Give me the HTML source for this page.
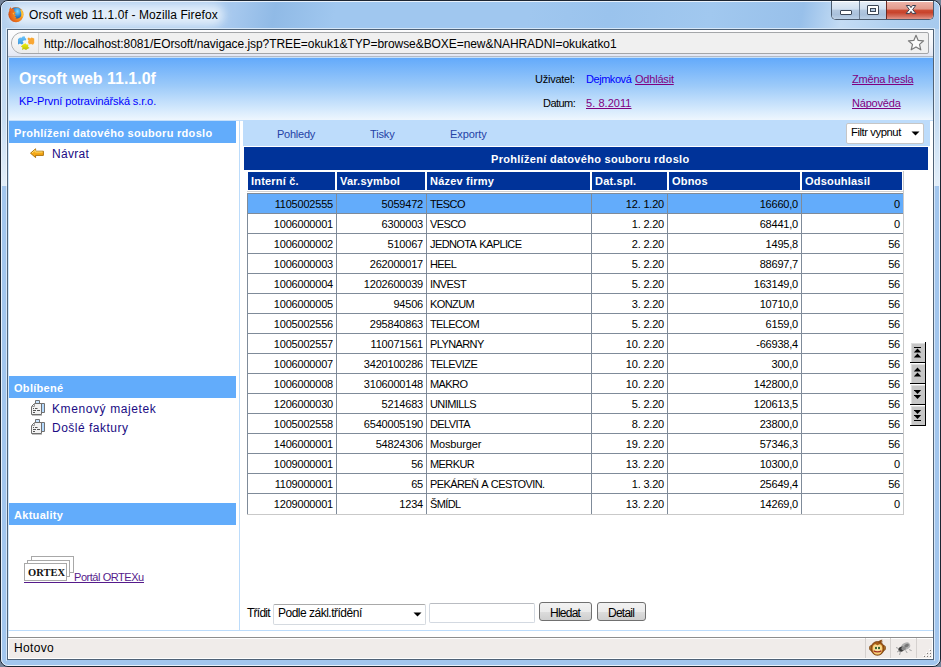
<!DOCTYPE html>
<html><head><meta charset="utf-8">
<style>
*{margin:0;padding:0;box-sizing:border-box}
html,body{width:941px;height:667px;overflow:hidden;background:#75849a}
body{position:relative;font-family:"Liberation Sans",sans-serif;font-size:11px;color:#000}
.a{position:absolute}
.t{position:absolute;white-space:nowrap;line-height:1}
#frame{left:0;top:0;width:941px;height:667px;border:1px solid #1c2532;border-radius:8px 8px 8px 8px;background:#a2c6ee}
#frame2{left:1px;top:1px;width:939px;height:665px;border:1px solid rgba(255,255,255,.75);border-radius:7px}
#navbar{left:7px;top:29px;width:927px;height:631px;border:1px solid #4f6277;background:#fff}
#navgrad{left:8px;top:30px;width:925px;height:28px;background:linear-gradient(#fdfdfe,#f4f6fa 50%,#e0e4f2)}
#url{left:11px;top:32px;width:918px;height:22px;border:1px solid #a4a6a9;border-radius:11px 2px 2px 11px;background:#f0f0f0}
#ident{left:12px;top:33px;width:27px;height:20px;border-radius:10px 0 0 10px;background:linear-gradient(#fbfbfb,#ececec);border-right:1px solid #d6d6d6}
#hdr{left:8px;top:58px;width:925px;height:62px;background:linear-gradient(#63aafb,#9ccaf9 45%,#d8ebfd 85%,#eef6fe)}
.sbh{position:absolute;left:9px;width:227px;height:22px;background:#62acfb;color:#fff;font-weight:bold;font-size:11px}
.sbh span{position:absolute;left:5px;top:7px;line-height:1;white-space:nowrap;letter-spacing:.3px}
.lnk{color:#800080;text-decoration:underline}
.blue{color:#0000ff}
.th{position:absolute;top:172px;height:18px;background:#003399;color:#fff;font-weight:bold}
.th span{position:absolute;left:3px;top:4px;line-height:1;white-space:nowrap;letter-spacing:.2px}
.hl{position:absolute;height:1px;background:#7f8b99}
.vl{position:absolute;width:1px;background:#7f8b99}
.cell{position:absolute;line-height:1;white-space:nowrap;letter-spacing:-.2px}
.r{text-align:right}
.btn{position:absolute;border:1px solid #707070;border-radius:3px;background:linear-gradient(#f2f2f2 0,#ebebeb 50%,#dddddd 50%,#cfcfcf 100%)}
.sb{position:absolute;left:911px;width:15px;height:20px;background:#c8c8c8;border-top:1px solid #fff;border-left:1px solid #fff;border-right:1px solid #000;border-bottom:1px solid #000}

#glass{left:2px;top:2px;width:937px;height:27px;border-radius:6px 6px 0 0;background:linear-gradient(100deg,#b4d0ee 0px,#a6c8ee 230px,#90bae6 270px,#a0c7ef 330px,#a0c7ef 520px,#9ac3ed 600px,#a1c8ef 700px,#98c0ea 790px,#c4dcf4 830px,#b0d0f0 880px,#a4c8ee 941px)}
#glow{left:10px;top:4px;width:214px;height:22px;border-radius:10px;background:rgba(235,243,252,.85);filter:blur(5px)}
.lnk{text-decoration-skip-ink:none}

</style></head><body>
<div class="a" id="frame"></div>
<div class="a" id="frame2"></div>
<div class="a" id="glass"></div>
<div class="a" id="glow"></div>
<div class="a" style="left:2px;top:29px;width:5px;height:157px;background:linear-gradient(#b8d3ef,#c6dcf2 55%,#e2eef9)"></div>
<div class="a" style="left:934px;top:29px;width:5px;height:157px;background:linear-gradient(#b8d3ef,#c6dcf2 55%,#e2eef9)"></div>
<div class="a" style="left:6px;top:28px;width:1px;height:633px;background:rgba(255,255,255,.55)"></div>
<div class="a" style="left:934px;top:28px;width:1px;height:633px;background:rgba(255,255,255,.55)"></div>
<svg class="a" style="left:8px;top:7px" width="16" height="16" viewBox="0 0 16 16">
<defs><radialGradient id="fxo" cx="0.75" cy="0.45" r="0.8"><stop offset="0" stop-color="#ffd23a"/><stop offset="0.35" stop-color="#f7931e"/><stop offset="0.8" stop-color="#e2601a"/><stop offset="1" stop-color="#b8400f"/></radialGradient>
<radialGradient id="fxb" cx="0.55" cy="0.35" r="0.7"><stop offset="0" stop-color="#7fd8fb"/><stop offset="0.6" stop-color="#2f8ad6"/><stop offset="1" stop-color="#1c4f9c"/></radialGradient></defs>
<circle cx="8" cy="7.6" r="7.6" fill="url(#fxo)"/>
<path d="M4.6 1.3C6.8.2 10.6.3 12.4 2 13.6 3.6 13.8 7.6 12.6 9.8 11.3 11.6 8.6 12 7.4 11.2L8.4 10.2 6.6 9.4 8 8.4 6.4 7 7.8 5.8 6.6 4.6 5.6 4.2Z" fill="url(#fxb)"/>
<path d="M1 3.5C1.4 1.6 2.3.4 2.9 0 2.9 1.2 3.4 2 4 2.4 4.8 1.6 5.6 1.6 6.2 2 5.6 2.6 5.8 3.4 6.6 3.8 6.2 4.6 5.4 4.6 5 5.2Z" fill="#ea6a1c"/>
<path d="M13.4 2.4C15.2 4.8 15.6 8.6 14.4 11 14.2 8.6 13.6 5.4 12.2 3.4Z" fill="#ffc93a" opacity=".9"/>
<path d="M4.6 6.2 6.2 6.6 5.4 7.6Z" fill="#fbd26a"/>
</svg>
<div class="t" style="left:29px;top:9px;font-size:12px;letter-spacing:.1px;color:#000">Orsoft web 11.1.0f - Mozilla Firefox</div>
<div class="a" style="left:831px;top:1px;width:103px;height:19px;border:1px solid #4a5a6e;border-top:none;border-radius:0 0 5px 5px;overflow:hidden;background:#fff">
<div class="a" style="left:0;top:1px;width:27px;height:17px;background:linear-gradient(#e4edf7,#d1e0f0 40%,#b3c8e0 50%,#a9c0db 75%,#bcd0e6)"></div>
<div class="a" style="left:27px;top:0;width:1px;height:19px;background:#6a7b90"></div>
<div class="a" style="left:28px;top:1px;width:26px;height:17px;background:linear-gradient(#e4edf7,#d1e0f0 40%,#b3c8e0 50%,#a9c0db 75%,#bcd0e6)"></div>
<div class="a" style="left:54px;top:0;width:1px;height:19px;background:#6b2a22"></div>
<div class="a" style="left:55px;top:1px;width:47px;height:17px;background:linear-gradient(#eeb3a8,#e29a8c 40%,#cc4b33 50%,#c8432c 62%,#d4705f 85%,#e4968a)"></div>
<div class="a" style="left:8px;top:9px;width:12px;height:5px;background:#fff;border:1px solid #3b4656;border-radius:1px"></div>
<div class="a" style="left:35px;top:4px;width:12px;height:10px;background:#fff;border:1px solid #3b4656;border-radius:1px"></div>
<div class="a" style="left:38px;top:7px;width:6px;height:4px;background:#b8cbe2;border:1px solid #3b4656"></div>
<svg class="a" style="left:73px;top:3px" width="13" height="12" viewBox="0 0 13 12"><path d="M1.3 1.5H4.6L6 3.6 7.4 1.5H10.7L7.7 5.5 10.9 9.6H7.5L6 7.4 4.5 9.6H1.1L4.3 5.5Z" fill="#fbfbfb" stroke="#3b3f50" stroke-width="1" stroke-linejoin="round"/></svg>
</div>
<div class="a" style="left:7px;top:28px;width:927px;height:1px;background:#d6e7f8"></div>
<div class="a" id="navbar"></div>
<div class="a" id="navgrad"></div>
<div class="a" id="url"></div>
<div class="a" id="ident"></div>
<svg class="a" style="left:14px;top:33px" width="24" height="20" viewBox="0 0 24 20">
<defs><linearGradient id="pzb" x1="0" y1="0" x2="0" y2="1"><stop offset="0" stop-color="#6cc4fa"/><stop offset="1" stop-color="#3b98e0"/></linearGradient>
<linearGradient id="pzy" x1="0" y1="0" x2="0" y2="1"><stop offset="0" stop-color="#f4f20a"/><stop offset="1" stop-color="#b8bc0a"/></linearGradient></defs>
<path d="M4 6 6 4.4 7.6 4.8 8.6 3.4 10.6 3.3 11.2 5 12.4 6 11.6 7.6 10 7.2 8.6 8.6 9.6 10 8 11.4 6 10.4 4 11.4Z" fill="url(#pzb)"/>
<path d="M13.7 5 15 4.5 16 5.5 17.5 4.5 19 5 20.2 5.6 20.2 10 19 11.7 17 11 15.5 11.5 14.5 10.5 14 9 14.6 7.5 13.7 6.5Z" fill="#f9a733"/>
<path d="M9 11.5 11.5 10.2 12.5 11.5 14.5 11.5 14 13.5 15.6 15 13.5 16 12 17.1 10 16 8 17 8.5 14.5 6.8 13.5Z" fill="url(#pzy)"/>
</svg>
<div class="t" style="left:44px;top:38px;font-size:12px;letter-spacing:-0.07px;color:#000">http://localhost:8081/EOrsoft/navigace.jsp?TREE=okuk1&amp;TYP=browse&amp;BOXE=new&amp;NAHRADNI=okukatko1</div>
<svg class="a" style="left:907px;top:34px" width="18" height="18" viewBox="0 0 18 18">
<path d="M9 1.3 11.2 6.4 16.6 6.8 12.5 10.4 13.8 15.8 9 12.9 4.2 15.8 5.5 10.4 1.4 6.8 6.8 6.4Z" fill="#fbfbfb" stroke="#7a7a7a" stroke-width="1.2" stroke-linejoin="round"/>
</svg>
<div class="a" style="left:8px;top:56px;width:925px;height:1px;background:#b3bac6"></div>
<div class="a" style="left:8px;top:57px;width:925px;height:1px;background:#c3e0fb"></div>
<div class="a" id="hdr"></div>
<div class="t" style="left:19px;top:71px;font-size:16px;font-weight:bold;color:#fff">Orsoft web 11.1.0f</div>
<div class="t blue" style="left:19px;top:96px;font-size:11px;letter-spacing:-.1px">KP-První potravinářská s.r.o.</div>
<div class="t" style="left:535px;top:74px;font-size:11px;letter-spacing:-.25px">Uživatel:</div>
<div class="t blue" style="left:586px;top:74px;font-size:11px;letter-spacing:-.45px">Dejmková</div>
<div class="t lnk" style="left:635px;top:74px;font-size:11px;letter-spacing:-.2px">Odhlásit</div>
<div class="t" style="left:543px;top:98px;font-size:11px;letter-spacing:-.55px">Datum:</div>
<div class="t lnk" style="left:586px;top:98px;font-size:11px;letter-spacing:.05px">5. 8.2011</div>
<div class="t lnk" style="left:852px;top:74px;font-size:11px;letter-spacing:-.2px">Změna hesla</div>
<div class="t lnk" style="left:852px;top:98px;font-size:11px;letter-spacing:-.2px">Nápověda</div>
<div class="a" style="left:8px;top:58px;width:1px;height:579px;background:#cfe6fb"></div>
<div class="a" style="left:8px;top:120px;width:925px;height:1px;background:#c4dffb"></div>
<div class="a" style="left:239px;top:120px;width:1px;height:511px;background:#bcdcfb"></div>
<div class="a" style="left:8px;top:630px;width:925px;height:1px;background:#bcdcfb"></div>
<div class="sbh" style="top:121px"><span>Prohlížení datového souboru rdoslo</span></div>
<svg class="a" style="left:29px;top:147px" width="16" height="12" viewBox="0 0 16 12">
<path d="M1.5 6.2 6.6 1.8V4.2H14.4V8.4H6.6V10.6Z" fill="#f5a816" stroke="#a86b00" stroke-width="0.9" stroke-linejoin="round"/>
<path d="M3 6 6.2 3.2V5H13.6" fill="none" stroke="#ffe27a" stroke-width="0.9"/>
</svg>
<div class="t" style="left:52px;top:148px;font-size:12px;letter-spacing:.3px;color:#200c84">Návrat</div>
<div class="sbh" style="top:376px"><span>Oblíbené</span></div>
<svg class="a" style="left:28px;top:397px" width="20" height="20" viewBox="0 0 20 20">
<path d="M7.5 3.5H11.5V6.5H16.5V15.5H7.5Z" fill="#c6e3ff" stroke="#727272" stroke-width="1"/>
<path d="M15 7.5V15" stroke="#8cc6fb" stroke-width="1.2" stroke-dasharray="1 1"/>
<path d="M3.5 9.5 6.5 6.5H13.5V17.5H3.5Z" fill="#f2f2f2" stroke="#6e6e6e" stroke-width="1"/>
<path d="M3.5 9.5H6.5V6.5" fill="none" stroke="#9a9a9a" stroke-width="1"/>
<path d="M5 11.5H6M7 11.5H9.5M5 13.5H8M9 13.5H12M5 15.5H7" stroke="#555" stroke-width="1"/>
<path d="M4 18.5H14" stroke="#c0c0c0" stroke-width="1"/>
</svg>
<div class="t" style="left:52px;top:403px;font-size:12px;letter-spacing:.6px;color:#200c84">Kmenový majetek</div>
<svg class="a" style="left:28px;top:416px" width="20" height="20" viewBox="0 0 20 20">
<path d="M7.5 3.5H11.5V6.5H16.5V15.5H7.5Z" fill="#c6e3ff" stroke="#727272" stroke-width="1"/>
<path d="M15 7.5V15" stroke="#8cc6fb" stroke-width="1.2" stroke-dasharray="1 1"/>
<path d="M3.5 9.5 6.5 6.5H13.5V17.5H3.5Z" fill="#f2f2f2" stroke="#6e6e6e" stroke-width="1"/>
<path d="M3.5 9.5H6.5V6.5" fill="none" stroke="#9a9a9a" stroke-width="1"/>
<path d="M5 11.5H6M7 11.5H9.5M5 13.5H8M9 13.5H12M5 15.5H7" stroke="#555" stroke-width="1"/>
<path d="M4 18.5H14" stroke="#c0c0c0" stroke-width="1"/>
</svg>
<div class="t" style="left:52px;top:422px;font-size:12px;letter-spacing:.5px;color:#200c84">Došlé faktury</div>
<div class="sbh" style="top:503px"><span>Aktuality</span></div>
<div class="a" style="left:31px;top:556px;width:43px;height:17px;border:1px solid #a8a8a8;background:#fff"></div>
<div class="a" style="left:27px;top:560px;width:43px;height:17px;border:1px solid #a8a8a8;background:#fff"></div>
<div class="a" style="left:24px;top:563px;width:43px;height:18px;border:1px solid #a8a8a8;background:#fff"></div>
<div class="t" style="left:28px;top:568px;font-family:'Liberation Serif',serif;font-weight:bold;font-size:10.5px;letter-spacing:0px;color:#111">ORTEX</div>
<div class="t" style="left:74px;top:572px;font-size:11px;letter-spacing:-.45px;color:#551a8b">Portál ORTEXu</div>
<div class="a" style="left:24px;top:582px;width:120px;height:1px;background:#551a8b"></div>
<div class="a" style="left:243px;top:120px;width:687px;height:26px;background:#bddcfb"></div>
<div class="t" style="left:277px;top:129px;color:#2442a6;letter-spacing:-.25px">Pohledy</div>
<div class="t" style="left:370px;top:129px;color:#2442a6;letter-spacing:-.15px">Tisky</div>
<div class="t" style="left:450px;top:129px;color:#2442a6;letter-spacing:-.1px">Exporty</div>
<div class="a" style="left:846px;top:123px;width:78px;height:21px;border:1px solid #c6c6c6;border-radius:2px;background:#fff"></div>
<div class="t" style="left:851px;top:127px;font-size:11.3px;letter-spacing:-.45px">Filtr vypnut</div>
<svg class="a" style="left:911px;top:131px" width="9" height="5" viewBox="0 0 9 5"><path d="M0.5 0.5H8.5L4.5 4.5Z" fill="#000"/></svg>
<div class="a" style="left:244px;top:147px;width:684px;height:23px;background:#003399"></div>
<div class="t" style="left:491px;top:154px;font-weight:bold;color:#fff;letter-spacing:.3px">Prohlížení datového souboru rdoslo</div>
<div class="th" style="left:248px;width:87px"><span>Interní č.</span></div>
<div class="th" style="left:337px;width:88px"><span>Var.symbol</span></div>
<div class="th" style="left:427px;width:163px"><span>Název firmy</span></div>
<div class="th" style="left:592px;width:75px"><span>Dat.spl.</span></div>
<div class="th" style="left:669px;width:131px"><span>Obnos</span></div>
<div class="th" style="left:802px;width:100px"><span>Odsouhlasil</span></div>
<div class="a" style="left:903px;top:171px;width:1px;height:344px;background:#c9c9c9"></div>
<div class="a" style="left:247px;top:191px;width:656px;height:1px;background:#d2d2d2"></div>
<div class="a" style="left:248px;top:194px;width:655px;height:19px;background:#63acfb"></div>
<div class="hl" style="left:247px;top:193px;width:656px"></div>
<div class="hl" style="left:247px;top:213px;width:656px"></div>
<div class="hl" style="left:247px;top:233px;width:656px"></div>
<div class="hl" style="left:247px;top:253px;width:656px"></div>
<div class="hl" style="left:247px;top:273px;width:656px"></div>
<div class="hl" style="left:247px;top:293px;width:656px"></div>
<div class="hl" style="left:247px;top:313px;width:656px"></div>
<div class="hl" style="left:247px;top:333px;width:656px"></div>
<div class="hl" style="left:247px;top:353px;width:656px"></div>
<div class="hl" style="left:247px;top:373px;width:656px"></div>
<div class="hl" style="left:247px;top:393px;width:656px"></div>
<div class="hl" style="left:247px;top:413px;width:656px"></div>
<div class="hl" style="left:247px;top:433px;width:656px"></div>
<div class="hl" style="left:247px;top:453px;width:656px"></div>
<div class="hl" style="left:247px;top:473px;width:656px"></div>
<div class="hl" style="left:247px;top:493px;width:656px"></div>
<div class="a" style="left:247px;top:514px;width:657px;height:1px;background:#c9c9c9"></div>
<div class="vl" style="left:247px;top:193px;height:321px"></div>
<div class="vl" style="left:336px;top:193px;height:321px"></div>
<div class="vl" style="left:426px;top:193px;height:321px"></div>
<div class="vl" style="left:591px;top:193px;height:321px"></div>
<div class="vl" style="left:667px;top:193px;height:321px"></div>
<div class="vl" style="left:801px;top:193px;height:321px"></div>
<div class="cell r" style="left:247px;width:86px;top:199px">1105002555</div>
<div class="cell r" style="left:336px;width:87px;top:199px">5059472</div>
<div class="cell" style="left:430px;top:199px;letter-spacing:-.6px;word-spacing:1px">TESCO</div>
<div class="cell r" style="left:591px;width:73px;top:199px">12. 1.20</div>
<div class="cell r" style="left:667px;width:131px;top:199px">16660,0</div>
<div class="cell r" style="left:801px;width:99px;top:199px">0</div>
<div class="cell r" style="left:247px;width:86px;top:219px">1006000001</div>
<div class="cell r" style="left:336px;width:87px;top:219px">6300003</div>
<div class="cell" style="left:430px;top:219px;letter-spacing:-.6px;word-spacing:1px">VESCO</div>
<div class="cell r" style="left:591px;width:73px;top:219px">1. 2.20</div>
<div class="cell r" style="left:667px;width:131px;top:219px">68441,0</div>
<div class="cell r" style="left:801px;width:99px;top:219px">0</div>
<div class="cell r" style="left:247px;width:86px;top:239px">1006000002</div>
<div class="cell r" style="left:336px;width:87px;top:239px">510067</div>
<div class="cell" style="left:430px;top:239px;letter-spacing:-.6px;word-spacing:1px">JEDNOTA KAPLICE</div>
<div class="cell r" style="left:591px;width:73px;top:239px">2. 2.20</div>
<div class="cell r" style="left:667px;width:131px;top:239px">1495,8</div>
<div class="cell r" style="left:801px;width:99px;top:239px">56</div>
<div class="cell r" style="left:247px;width:86px;top:259px">1006000003</div>
<div class="cell r" style="left:336px;width:87px;top:259px">262000017</div>
<div class="cell" style="left:430px;top:259px;letter-spacing:-.6px;word-spacing:1px">HEEL</div>
<div class="cell r" style="left:591px;width:73px;top:259px">5. 2.20</div>
<div class="cell r" style="left:667px;width:131px;top:259px">88697,7</div>
<div class="cell r" style="left:801px;width:99px;top:259px">56</div>
<div class="cell r" style="left:247px;width:86px;top:279px">1006000004</div>
<div class="cell r" style="left:336px;width:87px;top:279px">1202600039</div>
<div class="cell" style="left:430px;top:279px;letter-spacing:-.6px;word-spacing:1px">INVEST</div>
<div class="cell r" style="left:591px;width:73px;top:279px">5. 2.20</div>
<div class="cell r" style="left:667px;width:131px;top:279px">163149,0</div>
<div class="cell r" style="left:801px;width:99px;top:279px">56</div>
<div class="cell r" style="left:247px;width:86px;top:299px">1006000005</div>
<div class="cell r" style="left:336px;width:87px;top:299px">94506</div>
<div class="cell" style="left:430px;top:299px;letter-spacing:-.6px;word-spacing:1px">KONZUM</div>
<div class="cell r" style="left:591px;width:73px;top:299px">3. 2.20</div>
<div class="cell r" style="left:667px;width:131px;top:299px">10710,0</div>
<div class="cell r" style="left:801px;width:99px;top:299px">56</div>
<div class="cell r" style="left:247px;width:86px;top:319px">1005002556</div>
<div class="cell r" style="left:336px;width:87px;top:319px">295840863</div>
<div class="cell" style="left:430px;top:319px;letter-spacing:-.6px;word-spacing:1px">TELECOM</div>
<div class="cell r" style="left:591px;width:73px;top:319px">5. 2.20</div>
<div class="cell r" style="left:667px;width:131px;top:319px">6159,0</div>
<div class="cell r" style="left:801px;width:99px;top:319px">56</div>
<div class="cell r" style="left:247px;width:86px;top:339px">1005002557</div>
<div class="cell r" style="left:336px;width:87px;top:339px">110071561</div>
<div class="cell" style="left:430px;top:339px;letter-spacing:-.6px;word-spacing:1px">PLYNARNY</div>
<div class="cell r" style="left:591px;width:73px;top:339px">10. 2.20</div>
<div class="cell r" style="left:667px;width:131px;top:339px">-66938,4</div>
<div class="cell r" style="left:801px;width:99px;top:339px">56</div>
<div class="cell r" style="left:247px;width:86px;top:359px">1006000007</div>
<div class="cell r" style="left:336px;width:87px;top:359px">3420100286</div>
<div class="cell" style="left:430px;top:359px;letter-spacing:-.6px;word-spacing:1px">TELEVIZE</div>
<div class="cell r" style="left:591px;width:73px;top:359px">10. 2.20</div>
<div class="cell r" style="left:667px;width:131px;top:359px">300,0</div>
<div class="cell r" style="left:801px;width:99px;top:359px">56</div>
<div class="cell r" style="left:247px;width:86px;top:379px">1006000008</div>
<div class="cell r" style="left:336px;width:87px;top:379px">3106000148</div>
<div class="cell" style="left:430px;top:379px;letter-spacing:-.6px;word-spacing:1px">MAKRO</div>
<div class="cell r" style="left:591px;width:73px;top:379px">10. 2.20</div>
<div class="cell r" style="left:667px;width:131px;top:379px">142800,0</div>
<div class="cell r" style="left:801px;width:99px;top:379px">56</div>
<div class="cell r" style="left:247px;width:86px;top:399px">1206000030</div>
<div class="cell r" style="left:336px;width:87px;top:399px">5214683</div>
<div class="cell" style="left:430px;top:399px;letter-spacing:-.6px;word-spacing:1px">UNIMILLS</div>
<div class="cell r" style="left:591px;width:73px;top:399px">5. 2.20</div>
<div class="cell r" style="left:667px;width:131px;top:399px">120613,5</div>
<div class="cell r" style="left:801px;width:99px;top:399px">56</div>
<div class="cell r" style="left:247px;width:86px;top:419px">1005002558</div>
<div class="cell r" style="left:336px;width:87px;top:419px">6540005190</div>
<div class="cell" style="left:430px;top:419px;letter-spacing:-.6px;word-spacing:1px">DELVITA</div>
<div class="cell r" style="left:591px;width:73px;top:419px">8. 2.20</div>
<div class="cell r" style="left:667px;width:131px;top:419px">23800,0</div>
<div class="cell r" style="left:801px;width:99px;top:419px">56</div>
<div class="cell r" style="left:247px;width:86px;top:439px">1406000001</div>
<div class="cell r" style="left:336px;width:87px;top:439px">54824306</div>
<div class="cell" style="left:430px;top:439px;letter-spacing:-.15px;word-spacing:1px">Mosburger</div>
<div class="cell r" style="left:591px;width:73px;top:439px">19. 2.20</div>
<div class="cell r" style="left:667px;width:131px;top:439px">57346,3</div>
<div class="cell r" style="left:801px;width:99px;top:439px">56</div>
<div class="cell r" style="left:247px;width:86px;top:459px">1009000001</div>
<div class="cell r" style="left:336px;width:87px;top:459px">56</div>
<div class="cell" style="left:430px;top:459px;letter-spacing:-.6px;word-spacing:1px">MERKUR</div>
<div class="cell r" style="left:591px;width:73px;top:459px">13. 2.20</div>
<div class="cell r" style="left:667px;width:131px;top:459px">10300,0</div>
<div class="cell r" style="left:801px;width:99px;top:459px">0</div>
<div class="cell r" style="left:247px;width:86px;top:479px">1109000001</div>
<div class="cell r" style="left:336px;width:87px;top:479px">65</div>
<div class="cell" style="left:430px;top:479px;letter-spacing:-.6px;word-spacing:1px">PEKÁREŇ A CESTOVIN.</div>
<div class="cell r" style="left:591px;width:73px;top:479px">1. 3.20</div>
<div class="cell r" style="left:667px;width:131px;top:479px">25649,4</div>
<div class="cell r" style="left:801px;width:99px;top:479px">56</div>
<div class="cell r" style="left:247px;width:86px;top:499px">1209000001</div>
<div class="cell r" style="left:336px;width:87px;top:499px">1234</div>
<div class="cell" style="left:430px;top:499px;letter-spacing:-.6px;word-spacing:1px">ŠMÍDL</div>
<div class="cell r" style="left:591px;width:73px;top:499px">13. 2.20</div>
<div class="cell r" style="left:667px;width:131px;top:499px">14269,0</div>
<div class="cell r" style="left:801px;width:99px;top:499px">0</div>
<div class="a" style="left:925px;top:342px;width:1px;height:84px;background:#000"></div>
<div class="a" style="left:911px;top:343px;width:14px;height:19px;background:#c6c6c6;border-top:1px solid #dedede;border-left:1px solid #dedede"></div>
<div class="a" style="left:910px;top:362px;width:15px;height:1px;background:#000"></div>
<div class="a" style="left:911px;top:364px;width:14px;height:19px;background:#c6c6c6;border-top:1px solid #dedede;border-left:1px solid #dedede"></div>
<div class="a" style="left:910px;top:383px;width:15px;height:1px;background:#000"></div>
<div class="a" style="left:911px;top:385px;width:14px;height:19px;background:#c6c6c6;border-top:1px solid #dedede;border-left:1px solid #dedede"></div>
<div class="a" style="left:910px;top:404px;width:15px;height:1px;background:#000"></div>
<div class="a" style="left:911px;top:406px;width:14px;height:19px;background:#c6c6c6;border-top:1px solid #dedede;border-left:1px solid #dedede"></div>
<div class="a" style="left:910px;top:425px;width:15px;height:1px;background:#000"></div>
<svg class="a" style="left:914px;top:343px" width="8" height="82" viewBox="0 0 8 82">
<g fill="#000">
<rect x="0" y="4" width="7" height="1"/><path d="M3.5 5.5 7.2 9.5H-.2Z"/><path d="M3.5 10.5 7.2 14.5H-.2Z"/>
<path d="M3.5 24.5 7.2 28.5H-.2Z"/><path d="M3.5 29.5 7.2 33.5H-.2Z"/>
<path d="M-.2 47H7.2L3.5 51Z"/><path d="M-.2 52H7.2L3.5 56Z"/>
<path d="M-.2 67H7.2L3.5 71Z"/><path d="M-.2 72H7.2L3.5 76Z"/><rect x="0" y="77" width="7" height="1"/>
</g></svg>
<div class="t" style="left:247px;top:607px;font-size:12px;letter-spacing:-.75px">Třídit</div>
<div class="a" style="left:273px;top:604px;width:153px;height:21px;border:1px solid #d5dae0;border-top-color:#a9a9a9;border-radius:2px;background:#fff"></div>
<div class="t" style="left:278px;top:607px;font-size:12px;letter-spacing:-.5px">Podle zákl.třídění</div>
<svg class="a" style="left:413px;top:612px" width="9" height="5" viewBox="0 0 9 5"><path d="M0.5 0.5H8.5L4.5 4.5Z" fill="#000"/></svg>
<div class="a" style="left:429px;top:603px;width:106px;height:20px;border:1px solid #d3d9e1;border-top-color:#b9bcc2;border-radius:2px;background:#fff"></div>
<div class="btn" style="left:539px;top:602px;width:53px;height:19px"></div>
<div class="t" style="left:550px;top:607px;font-size:12px;letter-spacing:-.75px">Hledat</div>
<div class="btn" style="left:597px;top:602px;width:49px;height:19px"></div>
<div class="t" style="left:608px;top:607px;font-size:12px;letter-spacing:-.75px">Detail</div>
<div class="a" style="left:8px;top:637px;width:925px;height:1px;background:#8d8d8d"></div>
<div class="a" style="left:8px;top:638px;width:925px;height:21px;background:#f0ecea;border-left:1px solid #fff;border-top:1px solid #fff"></div>
<div class="t" style="left:14px;top:642px;font-size:12px;letter-spacing:.32px">Hotovo</div>
<div class="a" style="left:865px;top:638px;width:1px;height:20px;background:#d5d1cf"></div>
<div class="a" style="left:890px;top:638px;width:1px;height:20px;background:#d5d1cf"></div>
<div class="a" style="left:916px;top:638px;width:1px;height:20px;background:#d5d1cf"></div>
<svg class="a" style="left:869px;top:639px" width="17" height="17" viewBox="0 0 17 17">
<defs><radialGradient id="gmf" cx="0.5" cy="0.4" r="0.6"><stop offset="0" stop-color="#fff0c0"/><stop offset="1" stop-color="#f3c868"/></radialGradient></defs>
<ellipse cx="2.3" cy="9" rx="1.9" ry="2.6" fill="#c98a3a" stroke="#7a4410" stroke-width=".7"/>
<ellipse cx="14.7" cy="9" rx="1.9" ry="2.6" fill="#c98a3a" stroke="#7a4410" stroke-width=".7"/>
<ellipse cx="8.5" cy="9.4" rx="6.6" ry="6.9" fill="#a85c16" stroke="#6e3a0c" stroke-width=".8"/>
<path d="M9 3.6C9.8 1.6 11.8.6 13.6.9 12.6 1.5 12.3 2.1 12.5 2.6 13.3 2.4 13.8 2.6 14.1 3 12.9 3.2 11.7 3.8 11.1 4.8Z" fill="#8a4a12"/>
<path d="M3.6 9.2C3.6 6.4 5.4 5 7 5.4 7.8 5.6 8.2 6.2 8.5 6.2 8.8 6.2 9.2 5.6 10 5.4 11.6 5 13.4 6.4 13.4 9.2 13.4 13.2 11.4 15.6 8.5 15.6 5.6 15.6 3.6 13.2 3.6 9.2Z" fill="url(#gmf)"/>
<ellipse cx="7" cy="9" rx=".95" ry="1.2" fill="#0e4a1c"/><ellipse cx="10" cy="9" rx=".95" ry="1.2" fill="#0e4a1c"/>
<path d="M4.6 11.8C6.4 13.2 10.6 13.2 12.4 11.8" stroke="#a02a22" stroke-width="1.1" fill="none"/>
</svg>
<svg class="a" style="left:895px;top:641px" width="18" height="15" viewBox="0 0 18 15">
<ellipse cx="10.8" cy="5.2" rx="4.6" ry="3.4" fill="#b0b0b0" transform="rotate(-25 10.8 5.2)"/>
<ellipse cx="11.6" cy="4.6" rx="2.4" ry="1.6" fill="#777" transform="rotate(-25 11.6 4.6)"/>
<ellipse cx="6.2" cy="8.2" rx="2.9" ry="2.4" fill="#3a3a3a" transform="rotate(-25 6.2 8.2)"/>
<ellipse cx="8.6" cy="7.4" rx="2.2" ry="2" fill="#8a8a8a"/>
<path d="M1 6.5 3.8 7.6M2 11 4.6 9.6M5.4 10.6 4.6 14M10.6 9.4 12.2 12M14.2 8.6 16.6 9.6" stroke="#9a9a9a" stroke-width=".9" fill="none"/>
</svg>
<div class="a" style="left:8px;top:658px;width:925px;height:1px;background:#fff"></div><div class="a" style="left:932px;top:638px;width:1px;height:21px;background:#fff"></div><div class="a" style="left:929px;top:649px;width:1px;height:1px;background:#fff"></div><div class="a" style="left:930px;top:650px;width:1px;height:1px;background:#7d7b78"></div><div class="a" style="left:926px;top:652px;width:1px;height:1px;background:#fff"></div><div class="a" style="left:927px;top:653px;width:1px;height:1px;background:#7d7b78"></div><div class="a" style="left:929px;top:652px;width:1px;height:1px;background:#fff"></div><div class="a" style="left:930px;top:653px;width:1px;height:1px;background:#7d7b78"></div><div class="a" style="left:923px;top:655px;width:1px;height:1px;background:#fff"></div><div class="a" style="left:924px;top:656px;width:1px;height:1px;background:#7d7b78"></div><div class="a" style="left:926px;top:655px;width:1px;height:1px;background:#fff"></div><div class="a" style="left:927px;top:656px;width:1px;height:1px;background:#7d7b78"></div><div class="a" style="left:929px;top:655px;width:1px;height:1px;background:#fff"></div><div class="a" style="left:930px;top:656px;width:1px;height:1px;background:#7d7b78"></div>
</body></html>
